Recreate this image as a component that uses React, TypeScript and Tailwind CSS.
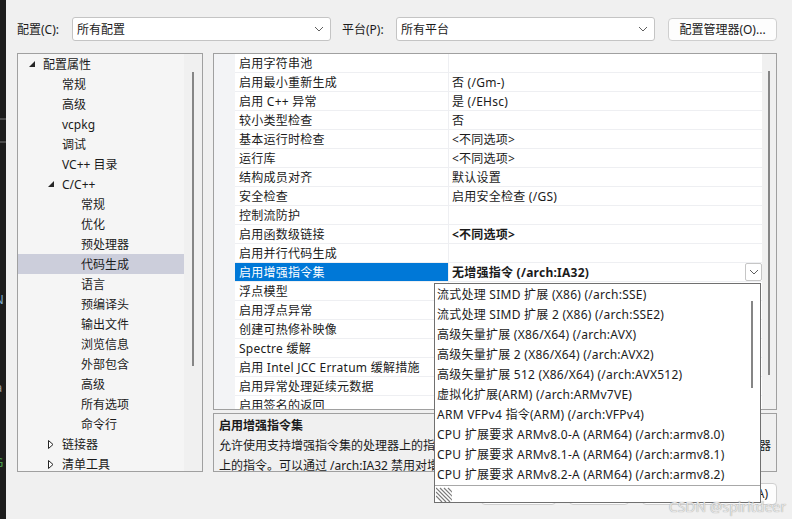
import React from 'react';

// 属性页对话框：C/C++ > 代码生成，"启用增强指令集" 下拉展开

type TreeItem = { t: string; l: number; arrow?: 'open' | 'closed'; sel?: boolean };

const tree: TreeItem[] = [
  { t: '配置属性', l: 0, arrow: 'open' },
  { t: '常规', l: 1 },
  { t: '高级', l: 1 },
  { t: 'vcpkg', l: 1 },
  { t: '调试', l: 1 },
  { t: 'VC++ 目录', l: 1 },
  { t: 'C/C++', l: 1, arrow: 'open' },
  { t: '常规', l: 2 },
  { t: '优化', l: 2 },
  { t: '预处理器', l: 2 },
  { t: '代码生成', l: 2, sel: true },
  { t: '语言', l: 2 },
  { t: '预编译头', l: 2 },
  { t: '输出文件', l: 2 },
  { t: '浏览信息', l: 2 },
  { t: '外部包含', l: 2 },
  { t: '高级', l: 2 },
  { t: '所有选项', l: 2 },
  { t: '命令行', l: 2 },
  { t: '链接器', l: 1, arrow: 'closed' },
  { t: '清单工具', l: 1, arrow: 'closed' },
];

type Prop = { name: string; value?: string; bold?: boolean; sel?: boolean };

const props: Prop[] = [
  { name: '启用字符串池' },
  { name: '启用最小重新生成', value: '否 (/Gm-)' },
  { name: '启用 C++ 异常', value: '是 (/EHsc)' },
  { name: '较小类型检查', value: '否' },
  { name: '基本运行时检查', value: '<不同选项>' },
  { name: '运行库', value: '<不同选项>' },
  { name: '结构成员对齐', value: '默认设置' },
  { name: '安全检查', value: '启用安全检查 (/GS)' },
  { name: '控制流防护' },
  { name: '启用函数级链接', value: '<不同选项>', bold: true },
  { name: '启用并行代码生成' },
  { name: '启用增强指令集', value: '无增强指令 (/arch:IA32)', bold: true, sel: true },
  { name: '浮点模型' },
  { name: '启用浮点异常' },
  { name: '创建可热修补映像' },
  { name: 'Spectre 缓解' },
  { name: '启用 Intel JCC Erratum 缓解措施' },
  { name: '启用异常处理延续元数据' },
  { name: '启用签名的返回' },
];

const options = [
  '流式处理 SIMD 扩展 (X86) (/arch:SSE)',
  '流式处理 SIMD 扩展 2 (X86) (/arch:SSE2)',
  '高级矢量扩展 (X86/X64) (/arch:AVX)',
  '高级矢量扩展 2 (X86/X64) (/arch:AVX2)',
  '高级矢量扩展 512 (X86/X64) (/arch:AVX512)',
  '虚拟化扩展(ARM) (/arch:ARMv7VE)',
  'ARM VFPv4 指令(ARM) (/arch:VFPv4)',
  'CPU 扩展要求 ARMv8.0-A (ARM64) (/arch:armv8.0)',
  'CPU 扩展要求 ARMv8.1-A (ARM64) (/arch:armv8.1)',
  'CPU 扩展要求 ARMv8.2-A (ARM64) (/arch:armv8.2)',
];

function Chevron() {
  return (
    <svg width="10" height="6" viewBox="0 0 10 6" className="shrink-0">
      <path d="M1 1 L5 5 L9 1" fill="none" stroke="#5f5f5f" strokeWidth="1" />
    </svg>
  );
}

function Combo({ text }: { text: string }) {
  return (
    <div className="flex h-[24px] w-[259px] items-center justify-between rounded-[3px] border border-[#c4c4c4] bg-white pl-[4px] pr-[6px]">
      <span className="pt-[1px] text-[12px] leading-[16px] text-[#1a1a1a]">{text}</span>
      <Chevron />
    </div>
  );
}

function TreeArrow({ kind }: { kind: 'open' | 'closed' }) {
  if (kind === 'open') {
    return (
      <svg width="6" height="6" viewBox="0 0 6 6">
        <path d="M6 0 L6 6 L0 6 Z" fill="#262626" />
      </svg>
    );
  }
  return (
    <svg width="6" height="9" viewBox="0 0 6 9">
      <path d="M0.5 0.5 L5 4.5 L0.5 8.5 Z" fill="white" stroke="#262626" strokeWidth="1" />
    </svg>
  );
}

function Grip() {
  return (
    <svg width="16" height="15" viewBox="0 0 16 15">
      {[0, 4, 8, 12].map((o) => (
        <path key={o} d={`M${o} 1 L${o + 14} 15`} stroke="#7a7a7a" strokeWidth="1.2" />
      ))}
      <path d="M0 5 L10 15" stroke="#7a7a7a" strokeWidth="1.2" />
      <path d="M0 9 L6 15" stroke="#7a7a7a" strokeWidth="1.2" />
    </svg>
  );
}

export default function App() {
  return (
    <div className="relative flex h-[519px] w-[792px] overflow-hidden bg-[#f0f0f0] font-[family-name:'Noto_Sans','Noto_Sans_CJK_SC',sans-serif] text-[12px] text-[#1b1b1b]">
      {/* 背后的编辑器窗口边缘 */}
      <div className="relative w-[6px] shrink-0 bg-[#1c1c1c] text-[13px]">
        <span className="absolute left-[-5px] top-[22px] text-[#c98f3c]">)</span>
        <div className="absolute left-0 top-[118px] h-[2px] w-[6px] bg-[#4a4a4a]" />
        <div className="absolute left-0 top-[141px] h-[2px] w-[6px] bg-[#4a4a4a]" />
        <span className="absolute left-[-5px] top-[236px] text-[#c98f3c]">)</span>
        <span className="absolute left-[-6px] top-[290px] text-[#7aa6c8]">N</span>
        <span className="absolute left-[-5px] top-[378px] text-[#9a9a9a]">a</span>
        <span className="absolute left-[-6px] top-[453px] text-[#4a9a4a]">G</span>
      </div>

      <div className="flex flex-1 flex-col pl-[11px]">
        {/* 顶部：配置 / 平台 */}
        <div className="mt-[17px] flex h-[24px] items-center">
          <span className="w-[55px] pt-[1px]">配置(C):</span>
          <Combo text="所有配置" />
          <span className="ml-[11px] w-[54px] pt-[1px]">平台(P):</span>
          <Combo text="所有平台" />
          <div className="ml-[13px] flex h-[23px] w-[109px] items-center justify-center rounded-[4px] border border-[#cfcfcf] bg-[#fdfdfd] pt-[1px]">
            配置管理器(O)...
          </div>
        </div>

        <div className="mt-[12px] flex">
          {/* 左侧树 */}
          <div className="flex h-[419px] w-[186px] border border-[#a0a0a0] bg-[#f5f5f5]">
            <div className="flex-1 overflow-hidden">
              {tree.map((it, i) => (
                <div
                  key={i}
                  className={`relative flex h-[20px] items-center whitespace-nowrap ${it.sel ? 'bg-[#cccedb]' : ''}`}
                  style={{ paddingLeft: 25 + it.l * 19 }}
                >
                  {it.arrow && (
                    <span className="absolute top-0 flex h-[20px] items-center" style={{ left: 11 + it.l * 19 }}>
                      <TreeArrow kind={it.arrow} />
                    </span>
                  )}
                  <span className="pt-[1px] leading-[16px]">{it.t}</span>
                </div>
              ))}
            </div>
            <div className="w-[18px] shrink-0 bg-[#f0f0f0] pt-[18px] pl-[8px]">
              <div className="h-[294px] w-[2px] bg-[#868686]" />
            </div>
          </div>

          {/* 右侧属性网格 + 说明 */}
          <div className="ml-[10px] flex w-[564px] flex-col">
            <div className="flex h-[357px] border border-[#a0a0a0] bg-white">
              <div className="w-[21px] shrink-0 bg-[#f3f4f6]" />
              <div className="flex-1 overflow-hidden tracking-[0.25px]">
                {props.map((p, i) => (
                  <div key={i} className="flex h-[19px] border-b border-[#eeeff2]">
                    <div
                      className={`flex w-[214px] shrink-0 items-center whitespace-nowrap border-r border-[#eeeff2] pl-[4px] ${
                        p.sel ? 'bg-[#0078d7] text-white' : ''
                      }`}
                    >
                      <span className="pt-[2px] leading-[16px]">{p.name}</span>
                    </div>
                    <div className="flex flex-1 items-center justify-between pl-[3px]">
                      <span className={`whitespace-nowrap pt-[2px] leading-[16px] ${p.bold ? 'font-bold' : ''}`}>{p.value ?? ''}</span>
                      {p.sel && (
                        <div className="flex h-[18px] w-[17px] items-center justify-center rounded-[2px] border border-[#c6c6c6] bg-white">
                          <Chevron />
                        </div>
                      )}
                    </div>
                  </div>
                ))}
              </div>
              <div className="w-[14px] shrink-0 bg-[#f0f0f0] pt-[17px] pl-[6px]">
                <div className="h-[304px] w-[2px] bg-[#868686]" />
              </div>
            </div>

            <div className="mt-[3px] h-[59px] border border-[#a0a0a0] bg-[#f0f0f0] px-[5px] pt-[2px]">
              <div className="font-bold leading-[20px]">启用增强指令集</div>
              <p className="line-clamp-2 leading-[20px]">
                允许使用支持增强指令集的处理器上的指令来生成代码。例如，编译器生成只能在支持该指令集的处理器上的指令。可以通过 /arch:IA32 禁用对增强指令集的使用，以便在较旧的处理器上运行生成的代码。
              </p>
            </div>
          </div>
        </div>

        {/* 底部按钮（被下拉列表遮挡） */}
        <div className="mt-[11px] flex justify-end gap-[13px] pr-[15px]">
          <div className="h-[22px] w-[75px] rounded-[4px] border border-[#cfcfcf] bg-[#fdfdfd]" />
          <div className="h-[22px] w-[60px] rounded-[4px] border border-[#cfcfcf] bg-[#fdfdfd]" />
          <div className="flex h-[22px] w-[135px] items-center justify-end rounded-[4px] border border-[#cfcfcf] bg-[#fdfdfd] pr-[8px]">
            应用(A)
          </div>
        </div>
      </div>

      {/* 展开的下拉列表 */}
      <div className="absolute left-[434px] top-[283px] flex h-[220px] w-[327px] flex-col border border-[#707070] bg-white tracking-[0.25px]">
        <div className="flex h-[203px]">
          <div className="flex-1 overflow-hidden">
            {options.map((o, i) => (
              <div key={i} className="flex h-[20px] items-center whitespace-nowrap pl-[2px]">
                <span className="pt-[1px] leading-[16px]">{o}</span>
              </div>
            ))}
          </div>
          <div className="w-[12px] shrink-0 pt-[17px] pl-[3px]">
            <div className="h-[87px] w-[2px] bg-[#868686]" />
          </div>
        </div>
        <div className="flex-1 border-t border-[#a8a8a8] pl-[1px] pt-[1px]">
          <Grip />
        </div>
      </div>

      {/* 水印 */}
      <div className="absolute bottom-[3px] right-[6px] text-[14px] leading-[18px] text-[#e6e6e6] [text-shadow:0_0_1px_#8a8a8a]">
        CSDN @spiritdeer
      </div>
    </div>
  );
}
